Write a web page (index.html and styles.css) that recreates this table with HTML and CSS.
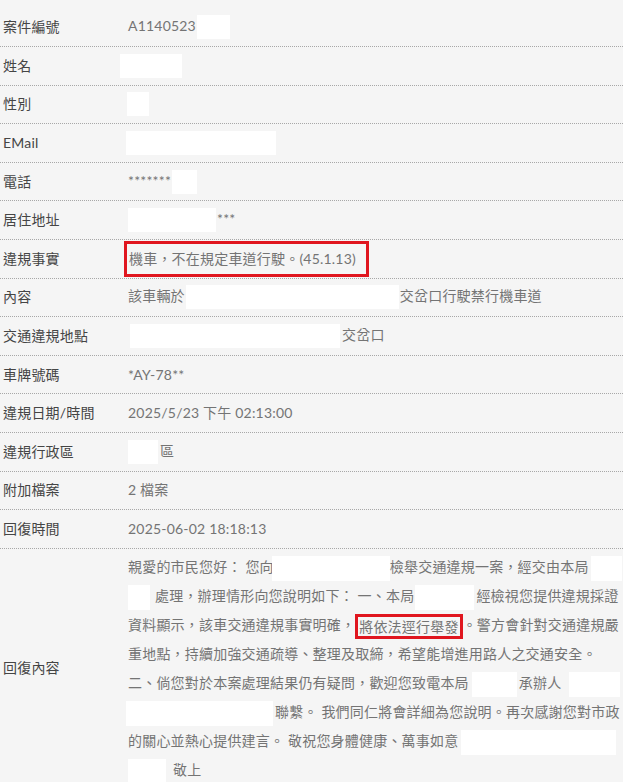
FILE: index.html
```
<!DOCTYPE html>
<html lang="zh-Hant">
<head>
<meta charset="utf-8">
<title>案件查詢結果</title>
<link rel="stylesheet" href="styles.css">
</head>
<body>
<div class="sheet">
  <div class="row"><div class="label">案件編號</div><div class="value">A1140523<span class="redact r-case"></span></div></div>
  <div class="row"><div class="label">姓名</div><div class="value"><span class="redact r-name"></span></div></div>
  <div class="row"><div class="label">性別</div><div class="value"><span class="redact r-sex"></span></div></div>
  <div class="row"><div class="label">EMail</div><div class="value"><span class="redact r-mail"></span></div></div>
  <div class="row"><div class="label">電話</div><div class="value">*******<span class="redact r-tel"></span></div></div>
  <div class="row"><div class="label">居住地址</div><div class="value"><span class="redact r-addr"></span>***</div></div>
  <div class="row"><div class="label">違規事實</div><div class="value"><span class="flag">機車，不在規定車道行駛。(45.1.13)</span></div></div>
  <div class="row"><div class="label">內容</div><div class="value">該車輛於<span class="redact r-where"></span>交岔口行駛禁行機車道</div></div>
  <div class="row"><div class="label">交通違規地點</div><div class="value"><span class="redact r-place"></span>交岔口</div></div>
  <div class="row"><div class="label">車牌號碼</div><div class="value">*AY-78**</div></div>
  <div class="row"><div class="label">違規日期/時間</div><div class="value">2025/5/23 下午 02:13:00</div></div>
  <div class="row"><div class="label">違規行政區</div><div class="value"><span class="redact r-dist"></span>區</div></div>
  <div class="row"><div class="label">附加檔案</div><div class="value">2 檔案</div></div>
  <div class="row"><div class="label">回復時間</div><div class="value">2025-06-02 18:18:13</div></div>
  <div class="row row-reply">
    <div class="label">回復內容</div>
    <div class="value reply">
      <div class="ln">親愛的市民您好： 您向<span class="redact r-a"></span>檢舉交通違規一案，經交由本局<span class="redact r-b"></span></div>
      <div class="ln"><span class="redact r-c"></span>處理，辦理情形向您說明如下： 一、本局<span class="redact r-d"></span>經檢視您提供違規採證</div>
      <div class="ln">資料顯示，該車交通違規事實明確，<span class="mark">將依法逕行舉發</span>。警方會針對交通違規嚴</div>
      <div class="ln">重地點，持續加強交通疏導、整理及取締，希望能增進用路人之交通安全。</div>
      <div class="ln">二、倘您對於本案處理結果仍有疑問，歡迎您致電本局<span class="redact r-e"></span>承辦人<span class="redact r-f"></span></div>
      <div class="ln"><span class="redact r-g"></span>聯繫。 我們同仁將會詳細為您說明。再次感謝您對市政</div>
      <div class="ln">的關心並熱心提供建言。 敬祝您身體健康、萬事如意<span class="redact r-h"></span></div>
      <div class="ln"><span class="redact r-i"></span>敬上</div>
    </div>
  </div>
</div>
</body>
</html>
```
FILE: styles.css
```
html, body {
  margin: 0;
  padding: 0;
  background: #f5f5f5;
  overflow: hidden;
}
body {
  padding-top: 8.5px;
  font-family: "Lato", "Noto Sans CJK TC", sans-serif;
  font-size: 14px;
  letter-spacing: 0.2px;
  color: #747474;
}
.sheet {
  width: 623px;
}
.row {
  display: grid;
  grid-template-columns: 128px 1fr;
  align-items: center;
  box-sizing: border-box;
  height: 38.6px;
  border-bottom: 1px dotted #a8a8a8;
  line-height: 20px;
}
.label {
  padding-left: 3px;
  color: #454545;
  white-space: nowrap;
}
.value {
  white-space: nowrap;
}
.redact {
  display: inline-block;
  height: 24px;
  background: #fff;
  vertical-align: middle;
}
.r-case { width: 33px; margin-left: 1px; }
.r-name { width: 62px; margin-left: -8px; }
.r-sex { width: 22px; margin-left: -1px; }
.r-mail { width: 150px; margin-left: -2px; }
.r-tel { width: 25px; margin-left: 1px; }
.r-addr { width: 88px; margin-right: 1px; }
.r-where { width: 213px; margin: 0 1px; }
.r-place { width: 210px; margin: 0 2px 0 2px; }
.r-dist { width: 30px; margin-right: 2px; }

.flag {
  display: inline-block;
  border: 3px solid #e0161f;
  padding: 5px 10px 5px 2px;
  margin: -8px 0 -8px -4px;
}

.row-reply {
  height: auto;
  border-bottom: none;
}
.row-reply .value {
  padding: 3px 0 4px;
  line-height: 29px;
}
.reply .redact {
  height: 25px;
}
.r-a { width: 118px; margin: 0 0 0 -2px; }
.r-b { width: 31px; margin-left: 2px; }
.r-c { width: 22px; margin-right: 5px; }
.r-d { width: 59px; margin: 0 2px 0 1px; }
.r-e { width: 45px; margin: 0 2px 0 3px; }
.r-f { width: 51px; margin-left: 8px; }
.r-g { width: 147px; margin: 0 2px 0 -2px; }
.r-h { width: 155px; margin-left: 3px; }
.r-i { width: 38px; margin-right: 7px; }

.mark {
  display: inline-block;
  border: 3px solid #e0161f;
  padding: 0 1px;
  line-height: 19px;
  vertical-align: middle;
}
```
